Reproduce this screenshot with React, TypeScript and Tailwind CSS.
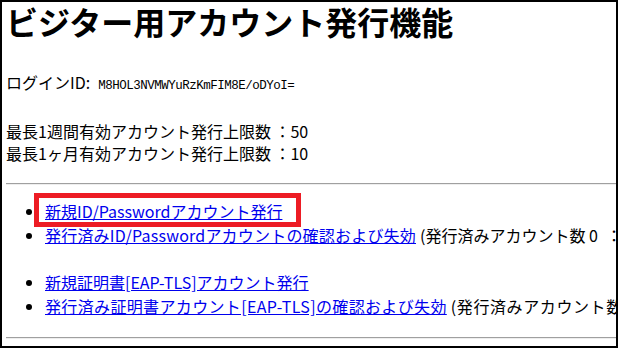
const font = { fontFamily: '"Noto Sans CJK JP", "Noto Sans", sans-serif' };

function Rule() {
  return <div className="h-[2px] border-t border-t-[#a0a0a0] border-b border-b-[#eeeeee] w-[700px]" />;
}

export default function App() {
  return (
    <div className="w-[618px] h-[348px] border-2 border-black bg-white overflow-hidden text-black" style={font}>
      <div className="pl-[4px] text-[16px] whitespace-nowrap">
        <h1 className="text-[32px] font-bold h-[40px] leading-[38px]">ビジター用アカウント発行機能</h1>

        <div className="mt-[28px] h-[24px] leading-[24px]">
          ログインID:
          <span
            className="ml-[8px] text-[12.5px] tracking-[-0.5px]"
            style={{ fontFamily: '"Liberation Mono", monospace' }}
          >
            M8HOL3NVMWYuRzKmFIM8E/oDYoI=
          </span>
        </div>

        <div className="mt-[26px] h-[22px] leading-[22px]">最長1週間有効アカウント発行上限数 ：50</div>
        <div className="h-[22px] leading-[22px]">最長1ヶ月有効アカウント発行上限数 ：10</div>

        <div className="mt-[19px]">
          <Rule />
        </div>

        <ul className="mt-[14px] list-disc pl-[39px]">
          <li className="h-[24px] leading-[24px]">
            <span className="relative">
              <a href="#" className="text-[#0000ee] underline">新規ID/Passwordアカウント発行</a>
              <span className="absolute -left-[11px] -top-[6px] w-[267px] h-[34px] border-[5px] border-[#ed1c24]" />
            </span>
          </li>
          <li className="h-[24px] leading-[24px]">
            <a href="#" className="text-[#0000ee] underline tracking-[0.2px]">発行済みID/Passwordアカウントの確認および失効</a>
            <span className="ml-[4px]">(発行済みアカウント数 0{"\u2002"}：50)</span>
          </li>
        </ul>

        <ul className="mt-[23px] list-disc pl-[39px]">
          <li className="h-[24px] leading-[24px]">
            <a href="#" className="text-[#0000ee] underline">新規証明書[EAP-TLS]アカウント発行</a>
          </li>
          <li className="h-[24px] leading-[24px]">
            <a href="#" className="text-[#0000ee] underline tracking-[0.35px]">発行済み証明書アカウント[EAP-TLS]の確認および失効</a>
            <span className="ml-[4px] tracking-[0.6px]">(発行済みアカウント数 0{"\u2002"}：10)</span>
          </li>
        </ul>

        <div className="mt-[19px]">
          <Rule />
        </div>
      </div>
    </div>
  );
}
